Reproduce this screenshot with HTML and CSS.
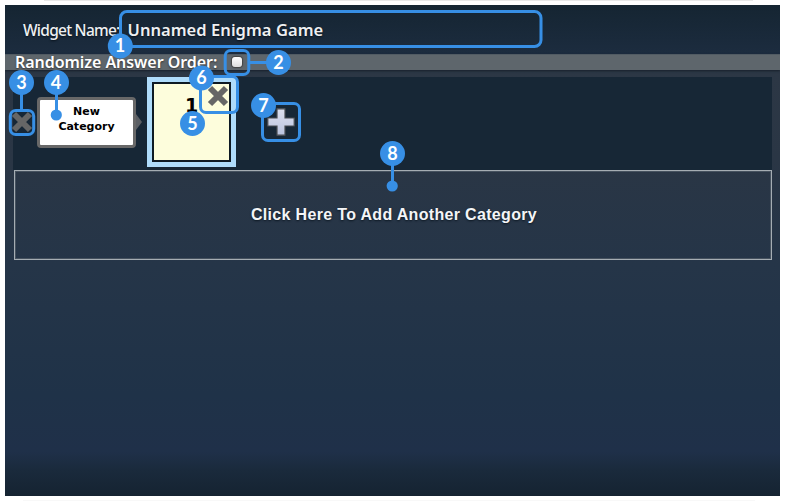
FILE: index.html
```html
<!DOCTYPE html>
<html lang="en">
<head>
<meta charset="utf-8">
<title>Enigma Game</title>
<link rel="stylesheet" href="styles.css">
</head>
<body>
<div class="rule rule-top"></div>
<main class="panel">
  <header class="header"><span class="label">Widget Name:</span><span class="name">Unnamed Enigma Game</span></header>
  <div class="bar"><span class="bar-text">Randomize Answer Order:</span><span class="check"></span></div>
  <section class="row">
    <svg class="remove" width="22" height="22" viewBox="0 0 22 22"><path d="M3 3L19 19M19 3L3 19"/></svg>
    <div class="category">New<br>Category</div>
    <div class="arrow"></div>
    <div class="card"><span class="num">1</span><svg class="close" width="22" height="22" viewBox="0 0 22 22"><path d="M3 3L19 19M19 3L3 19"/></svg></div>
    <svg class="plus" width="28" height="28" viewBox="0 0 28 28"><defs><linearGradient id="silver" x2="0" y2="1"><stop offset="0" stop-color="#dde0ee"/><stop offset="1" stop-color="#b9c3df"/></linearGradient></defs><path d="M10 .8h8v9.200h9.200v8h-9.200v9.200h-8v-9.200h-9.200v-8h9.200z"/></svg>
  </section>
  <div class="add">Click Here To Add Another Category</div>
</main>
<div class="rule rule-bottom"></div>
<svg class="notes" width="785" height="501" viewBox="0 0 785 501">
  <g class="rings">
    <rect x="120.500" y="11.500" width="420.500" height="35" rx="6.500"/>
    <rect x="225.200" y="50.500" width="23.600" height="24" rx="5.500"/>
    <rect x="10.300" y="110.500" width="23.400" height="24" rx="5.500"/>
    <rect x="200.500" y="76.500" width="37" height="36" rx="5.500"/>
    <rect x="262.500" y="103.500" width="37" height="37" rx="5.500"/>
    <path d="M249 62.500H270M21.500 90V110M56.500 90V115M392.500 160V186"/>
  </g>
  <g class="dots">
    <circle cx="56.300" cy="115" r="5.600"/><circle cx="392.200" cy="186" r="5.600"/>
    <circle cx="120.300" cy="46" r="12.500"/><circle cx="278.500" cy="62.500" r="12.500"/><circle cx="21.500" cy="82.500" r="12.500"/><circle cx="56.500" cy="82.500" r="12.500"/><circle cx="192.500" cy="123.500" r="12.500"/><circle cx="201.500" cy="78" r="12.500"/><circle cx="263.500" cy="105.500" r="12.500"/><circle cx="392.500" cy="153.500" r="12.500"/>
  </g>
  <g class="digits">
    <text x="120" y="52">1</text><text x="278.500" y="69">2</text><text x="21.500" y="89">3</text><text x="56" y="89">4</text><text x="192.500" y="130">5</text><text x="201.500" y="84">6</text><text x="263.500" y="112">7</text><text x="392.500" y="160">8</text>
  </g>
</svg>
</body>
</html>
```
FILE: styles.css
```css
* { box-sizing: border-box; }
body { margin: 0; height: 501px; background: #fff; overflow: hidden; position: relative; font-family: "Open Sans", sans-serif; }
.rule { height: 1px; width: 709px; margin-left: 44px; background: #e8e8e8; }
.rule-top { margin-bottom: 4px; }
.rule-bottom { margin: 4px 0 0 23px; width: 732px; background: #f8f8f8; }
.panel { width: 775px; height: 491px; margin-left: 5px; overflow: hidden; background: linear-gradient(#2c3745 0, #2c3745 65px, #2a3645 155px, #253548 260px, #1f3248 390px, #1f3049 447px, #1a2a3c 465px, #152331 491px); }
.header { height: 49px; padding-left: 18px; display: flex; align-items: center; background: linear-gradient(#152532, #1c2c3f); color: #eef0f2; text-shadow: 0 1px 2px #07101a; white-space: nowrap; }
.label { width: 104.5px; font: 500 15.5px "Noto Sans", sans-serif; letter-spacing: -0.75px; }
.name { font: 600 16.5px "Noto Sans", sans-serif; letter-spacing: 0.05px; }
.bar { height: 16px; padding-left: 10px; display: flex; align-items: center; background: #5e666c; box-shadow: inset 0 1px #515b63, 0 1px 2px #17202b; color: #fff; white-space: nowrap; }
.bar-text { width: 217px; font: 600 16px/16px "Noto Sans", sans-serif; letter-spacing: -0.05px; text-shadow: 0 1px 2px #333; }
.check { width: 10px; height: 10px; border-radius: 3px; background: linear-gradient(#fff, #ddd); box-shadow: 0 0 1px 1px #444; }
.row { height: 93px; width: 759px; margin: 7px 0 0 8px; display: flex; align-items: flex-start; background: #172736; }
.remove { margin: 34px 0 0 -2px; }
.remove path, .close path { stroke: #666; stroke-width: 6; }
.category { width: 99px; height: 51px; margin: 20px 0 0 4px; border: 3px solid #686868; border-radius: 4px; background: #fff; padding-top: 4px; text-align: center; font: bold 11px/15px "DejaVu Sans", sans-serif; color: #000; }
.arrow { margin-top: 37px; border: 8px solid transparent; border-right: 0; border-left: 6px solid #5b5f64; }
.card { width: 89px; height: 90px; margin-left: 5px; border: 4px solid #afdcfb; background: #fdfddc; box-shadow: inset 0 0 0 1px #afdcfb, inset 0 0 0 3px #0e1a24; display: flex; }
.num { width: 14px; margin: 12px 0 0 34px; font: bold 19px/24px "DejaVu Sans", sans-serif; }
.close { margin: 4px 0 0 8px; flex: none; }
.plus { margin: 31px 0 0 31px; }
.plus path { fill: url(#silver); stroke: #494d52; stroke-width: 1.2; }
.add { width: 758px; height: 90px; margin-left: 9px; border: 1px solid #a5adb3; box-shadow: inset 0 0 0 1px #46525f; display: flex; align-items: center; justify-content: center; font: bold 16px "Liberation Sans", sans-serif; letter-spacing: 0.33px; color: #f4f5f7; text-shadow: 0 1px 2px #0c1722; padding-left: 2px; }
.notes { position: absolute; left: 0; top: 0; }
.rings { fill: none; stroke: #378fe5; stroke-width: 3; }
.dots { fill: #378fe5; }
.digits { fill: #fff; font: bold 18px Lato, sans-serif; text-anchor: middle; }
```
